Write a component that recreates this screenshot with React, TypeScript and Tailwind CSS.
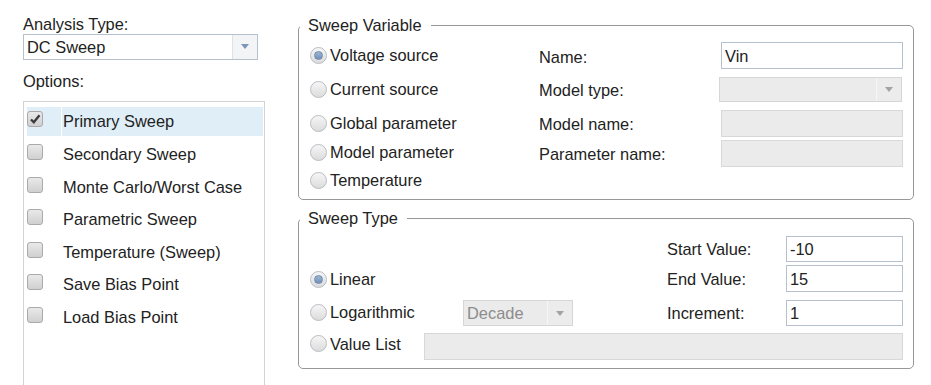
import React from 'react';

const font = "font-['Liberation_Sans',Arial,sans-serif]";

function Radio({ checked }: { checked?: boolean }) {
  return (
    <span className="flex h-[17px] w-[17px] shrink-0 items-center justify-center rounded-full border border-[#b8bcc2] bg-linear-to-b from-[#f6f6f6] to-[#dcdcdc]">
      {checked && <span className="h-[9px] w-[9px] rounded-full border border-[#6d8bb0] bg-linear-to-b from-[#9db6d4] to-[#7391b8]" />}
    </span>
  );
}

function RadioRow({ label, checked, className = '' }: { label: string; checked?: boolean; className?: string }) {
  return (
    <div className={`flex h-[20px] items-center gap-[3px] ${className}`}>
      <Radio checked={checked} />
      <span className="leading-[20px]">{label}</span>
    </div>
  );
}

function CheckBox({ checked }: { checked?: boolean }) {
  return (
    <span className="mb-[4px] flex h-[16px] w-[16px] items-center justify-center rounded-[3px] border border-[#aaaaaa] bg-linear-to-b from-[#e9e9e9] to-[#d0d0d0]">
      {checked && (
        <svg viewBox="0 0 12 12" className="h-[12px] w-[12px]">
          <path d="M2 6.5 L4.8 9.3 L10.5 2.2" stroke="#3a3a3a" strokeWidth="2.3" fill="none" />
        </svg>
      )}
    </span>
  );
}

function Arrow({ color }: { color: string }) {
  return (
    <svg viewBox="0 0 8 5" className="h-[5px] w-[8px]">
      <path d="M0 0 H8 L4 5 Z" fill={color} />
    </svg>
  );
}

function Select({ value, disabled, className = '' }: { value?: string; disabled?: boolean; className?: string }) {
  return (
    <div
      className={`flex items-stretch border ${
        disabled ? 'border-[#d6d6d6] bg-[#ebebeb] text-[#8c8c8c]' : 'border-[#b7c1ce] bg-white'
      } ${className}`}
    >
      <div className="flex flex-1 items-center pl-[3px] leading-[20px]">{value}</div>
      <div
        className={`flex w-[25px] items-center justify-center border-l ${
          disabled ? 'border-[#f6f6f6] bg-[#ececec]' : 'border-[#dde2e8] bg-[#f3f4f6]'
        }`}
      >
        <Arrow color={disabled ? '#a3a3a3' : '#7b95bd'} />
      </div>
    </div>
  );
}

function Input({ value, disabled, className = '' }: { value?: string; disabled?: boolean; className?: string }) {
  return (
    <div
      className={`flex items-center border pl-[3px] leading-[20px] ${
        disabled ? 'border-[#d8d8d8] bg-[#ebebeb]' : 'border-[#b7c1ce] bg-white'
      } ${className}`}
    >
      {value}
    </div>
  );
}

const options = [
  'Primary Sweep',
  'Secondary Sweep',
  'Monte Carlo/Worst Case',
  'Parametric Sweep',
  'Temperature (Sweep)',
  'Save Bias Point',
  'Load Bias Point',
];

export default function App() {
  return (
    <div className={`flex h-[385px] w-[931px] overflow-hidden bg-white text-[16.4px] text-[#222] ${font}`}>
      {/* Left column */}
      <div className="flex w-[298px] shrink-0 flex-col pl-[23px] pt-[14px]">
        <div className="h-[20px] leading-[20px]">Analysis Type:</div>
        <Select value="DC Sweep" className="h-[27px] w-[235px]" />
        <div className="mt-[11px] h-[20px] leading-[20px]">Options:</div>
        <div className="mt-[10px] h-[300px] w-[242px] border border-b-0 border-[#d3d3d3] pl-[3px] pr-[1px] pt-[3.2px]">
          {options.map((o, i) => (
            <div key={o} className="flex h-[32.67px] items-center">
              <div className={`flex h-[29px] flex-1 items-center ${i === 0 ? 'bg-[#e0eef8]' : ''}`}>
                <div className="flex h-full w-[34px] items-center">
                  <CheckBox checked={i === 0} />
                </div>
                <div className={`h-full w-[1px] ${i === 0 ? 'bg-white' : ''}`} />
                <span className="pl-[1px] leading-[20px]">{o}</span>
              </div>
            </div>
          ))}
        </div>
      </div>

      {/* Right column */}
      <div className="flex w-[616px] shrink-0 flex-col pt-[15px]">
        <fieldset className="rounded-[5px] border border-[#979797] pb-[9px] pl-[11px] pr-[10px]">
          <legend className="-ml-[10px] h-[20px] pl-[8px] pr-[9px] leading-[20px]">Sweep Variable</legend>
          <div className="flex items-start">
            <div className="flex w-[229px] flex-col">
              <RadioRow label="Voltage source" checked className="mt-[10px]" />
              <RadioRow label="Current source" className="mt-[14px]" />
              <RadioRow label="Global parameter" className="mt-[14px]" />
              <RadioRow label="Model parameter" className="mt-[9px]" />
              <RadioRow label="Temperature" className="mt-[8px]" />
            </div>
            <div className="flex flex-1 flex-col">
              <div className="mt-[7px] flex h-[27px] items-center">
                <span className="w-[182px] pt-[3px] leading-[20px]">Name:</span>
                <Input value="Vin" className="h-[27px] w-[182px] pl-[2px]" />
              </div>
              <div className="mt-[8px] flex h-[25px] items-center">
                <span className="w-[180px] leading-[20px]">Model type:</span>
                <Select disabled className="h-[25px] w-[183px]" />
              </div>
              <div className="mt-[8px] flex h-[27px] items-center">
                <span className="w-[182px] leading-[20px]">Model name:</span>
                <Input disabled className="h-[27px] w-[182px]" />
              </div>
              <div className="mt-[3px] flex h-[27px] items-center">
                <span className="w-[182px] leading-[20px]">Parameter name:</span>
                <Input disabled className="h-[27px] w-[182px]" />
              </div>
            </div>
          </div>
        </fieldset>

        <fieldset className="mt-[8px] rounded-[5px] border border-[#979797] pb-[8px] pl-[11px] pr-[10px]">
          <legend className="-ml-[10px] h-[20px] pl-[8px] pr-[9px] leading-[20px]">Sweep Type</legend>
          <div className="flex flex-col">
            <div className="mt-[8px] flex h-[26px] items-center">
              <span className="ml-auto w-[119px] leading-[20px]">Start Value:</span>
              <Input value="-10" className="h-[26px] w-[117px]" />
            </div>
            <div className="mt-[3px] flex h-[27px] items-center">
              <RadioRow label="Linear" checked className="mt-[1px]" />
              <span className="ml-auto w-[119px] leading-[20px]">End Value:</span>
              <Input value="15" className="h-[27px] w-[117px]" />
            </div>
            <div className="mt-[8px] flex h-[26px] items-center">
              <div className="w-[153px]">
                <RadioRow label="Logarithmic" className="-mt-[2px]" />
              </div>
              <Select value="Decade" disabled className="h-[26px] w-[110px]" />
              <span className="ml-auto w-[119px] leading-[20px]">Increment:</span>
              <Input value="1" className="h-[26px] w-[117px]" />
            </div>
            <div className="mt-[7px] flex h-[27px] items-center">
              <div className="w-[114px]">
                <RadioRow label="Value List" className="-mt-[6px]" />
              </div>
              <Input disabled className="h-[27px] flex-1" />
            </div>
          </div>
        </fieldset>
      </div>
    </div>
  );
}
